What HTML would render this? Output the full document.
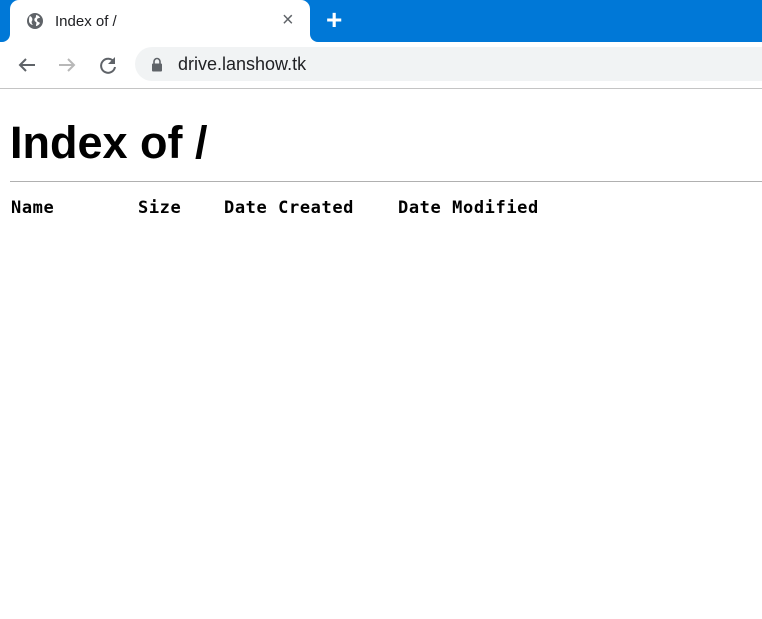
<!DOCTYPE html>
<html><head><style>
body{margin:0;width:762px;height:619px;background:#fff;position:relative;overflow:hidden;font-family:"Liberation Sans",sans-serif}
.abs{position:absolute}
.mono{font-family:"DejaVu Sans Mono","Liberation Mono",monospace;font-weight:bold;font-size:17px;color:#000;top:198px;letter-spacing:0.6px}
</style></head><body>
<div class="abs" style="left:0;top:0;width:762px;height:42px;background:#0078d7"></div>
<div class="abs" style="left:10px;top:0;width:300px;height:42px;background:#fff;border-radius:9px 9px 0 0"></div>
<div class="abs" style="left:2px;top:34px;width:8px;height:8px;background:#fff"></div>
<div class="abs" style="left:-6px;top:26px;width:16px;height:16px;background:#0078d7;border-radius:50%"></div>
<div class="abs" style="left:310px;top:34px;width:8px;height:8px;background:#fff"></div>
<div class="abs" style="left:310px;top:26px;width:16px;height:16px;background:#0078d7;border-radius:50%"></div>
<svg class="abs" style="left:26px;top:12px" width="18" height="18" viewBox="0 0 18 18"><circle cx="9" cy="9" r="8" fill="#5f6368"/><path d="M4 4c2 1 3 3 2 5-1 1 0 3 1 4-2 0-4-2-4-4 0-2 0-4 1-5zM10 3c2 0 4 2 4 3-1 0-3 0-3 2s2 2 3 3c-1 2-3 3-4 3 0-2 1-3 0-4-2-1-2-3-1-4 1 0 1-2 1-3z" fill="#fff"/></svg>
<div class="abs" style="left:55px;top:13px;font-size:15px;color:#202124">Index of /</div>
<div class="abs" style="left:282px;top:9px;font-size:20px;color:#5f6368">×</div>
<div class="abs" style="left:326px;top:4px;font-size:28px;color:#fff;font-weight:bold">+</div>
<svg class="abs" style="left:16px;top:54px" width="22" height="22" viewBox="0 0 22 22"><path d="M19 11H4M10 5l-6 6 6 6" stroke="#5f6368" stroke-width="2" fill="none"/></svg>
<svg class="abs" style="left:56px;top:54px" width="22" height="22" viewBox="0 0 22 22"><path d="M3 11h15M12 5l6 6-6 6" stroke="#b8b8b8" stroke-width="2" fill="none"/></svg>
<svg class="abs" style="left:97px;top:54px" width="22" height="22" viewBox="0 0 22 22"><path d="M17 8A7 7 0 1 0 18 13" stroke="#5f6368" stroke-width="2" fill="none"/><path d="M18 3v7h-7z" fill="#5f6368"/></svg>
<div class="abs" style="left:135px;top:47px;width:700px;height:34px;background:#f1f3f4;border-radius:17px"></div>
<svg class="abs" style="left:151px;top:57px" width="12" height="15" viewBox="0 0 12 15"><path d="M3 7V4.5a3 3 0 0 1 6 0V7" stroke="#5f6368" stroke-width="1.6" fill="none"/><rect x="1" y="6.5" width="10" height="8" rx="1" fill="#5f6368"/></svg>
<div class="abs" style="left:178px;top:54px;font-size:18px;color:#202124">drive.lanshow.tk</div>
<div class="abs" style="left:0;top:88px;width:762px;height:1px;background:#c4c4c4"></div>
<div class="abs" style="left:10px;top:117px;font-size:45px;font-weight:bold;color:#000">Index of /</div>
<div class="abs" style="left:10px;top:181px;width:752px;height:1px;background:#b0b0b0"></div>
<div class="abs mono" style="left:11px">Name</div>
<div class="abs mono" style="left:138px">Size</div>
<div class="abs mono" style="left:224px">Date Created</div>
<div class="abs mono" style="left:398px">Date Modified</div>
</body></html>
